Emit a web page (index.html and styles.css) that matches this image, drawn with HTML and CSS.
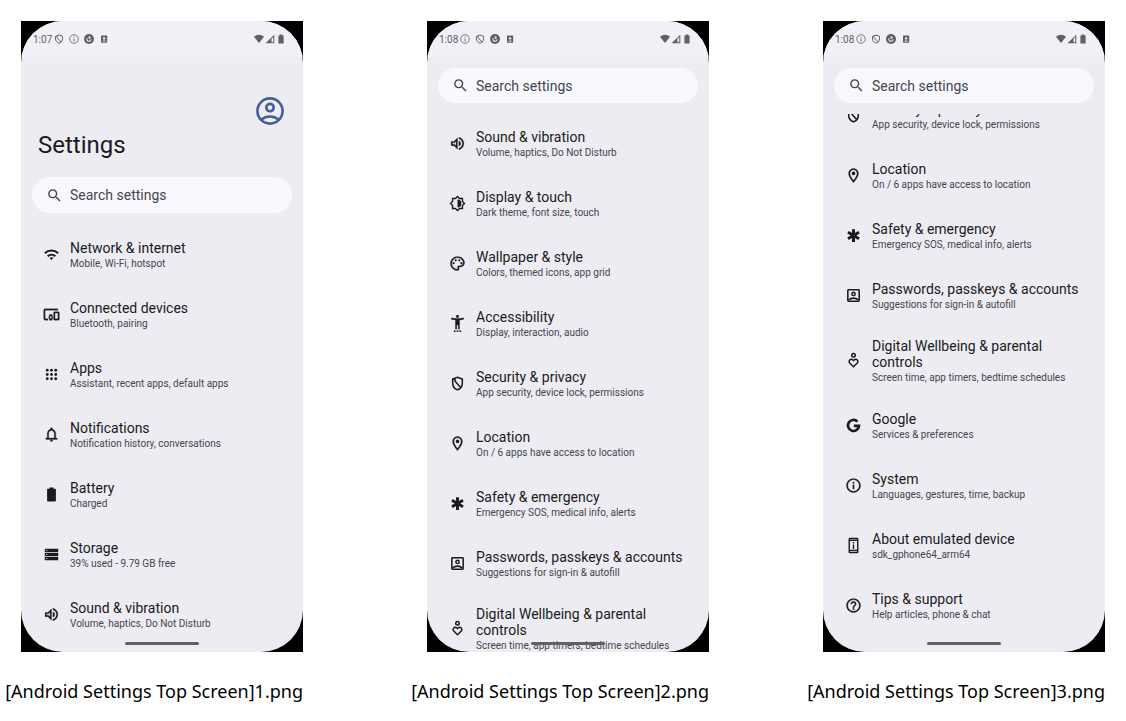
FILE: index.html
```html
<!DOCTYPE html>
<html lang="en">
<head>
<meta charset="utf-8">
<title>Android Settings Top Screen</title>
<link rel="stylesheet" href="styles.css">
</head>
<body>
<svg class="sprite" aria-hidden="true">
  <symbol id="search" viewBox="0 0 24 24"><path d="M15.5 14h-.79l-.28-.27A6.47 6.47 0 0 0 16 9.5 6.5 6.5 0 1 0 9.5 16c1.61 0 3.09-.59 4.23-1.57l.27.28v.79l5 4.99L20.49 19l-4.99-5zm-6 0C7.01 14 5 11.99 5 9.5S7.01 5 9.5 5 14 7.01 14 9.5 11.99 14 9.5 14z"/></symbol>
  <symbol id="wifi" viewBox="0 0 24 24"><path d="M2.6 10.2a13.6 13.6 0 0 1 18.8 0M6.6 14.4a7.8 7.8 0 0 1 10.8 0" fill="none" stroke="currentColor" stroke-width="2.8"/><path d="M12 15.8a3.6 3.6 0 0 1 2.6 1.1L12 19.6l-2.6-2.7a3.6 3.6 0 0 1 2.6-1.1z"/></symbol>
  <symbol id="devices" viewBox="0 0 24 24"><path d="M3 6h18V4H3c-1.1 0-2 .9-2 2v12c0 1.1.9 2 2 2h4v-2H3V6zm10 6H9v1.78c-.61.55-1 1.33-1 2.22s.39 1.67 1 2.22V20h4v-1.78c.61-.55 1-1.34 1-2.22s-.39-1.67-1-2.22V12zm-2 5.5c-.83 0-1.5-.67-1.5-1.5s.67-1.5 1.5-1.5 1.5.67 1.5 1.5-.67 1.5-1.5 1.5zM22 8h-6c-.5 0-1 .5-1 1v10c0 .5.5 1 1 1h6c.5 0 1-.5 1-1V9c0-.5-.5-1-1-1zm-1 10h-4v-8h4v8z" stroke="currentColor" stroke-width=".4"/></symbol>
  <symbol id="apps" viewBox="0 0 24 24"><circle cx="6" cy="6" r="2"/><circle cx="12" cy="6" r="2"/><circle cx="18" cy="6" r="2"/><circle cx="6" cy="12" r="2"/><circle cx="12" cy="12" r="2"/><circle cx="18" cy="12" r="2"/><circle cx="6" cy="18" r="2"/><circle cx="12" cy="18" r="2"/><circle cx="18" cy="18" r="2"/></symbol>
  <symbol id="bell" viewBox="0 0 24 24"><path d="M12 22c1.1 0 2-.9 2-2h-4c0 1.1.9 2 2 2zm6-5v-6c0-3.07-1.63-5.64-4.5-6.32V4c0-.83-.67-1.5-1.5-1.5s-1.5.67-1.5 1.5v.68C7.64 5.36 6 7.92 6 11v6H4v2h16v-2h-2zm-2 0H8v-6c0-2.48 1.51-4.5 4-4.5s4 2.02 4 4.5v6z" stroke="currentColor" stroke-width=".4"/></symbol>
  <symbol id="battery" viewBox="0 0 24 24"><path d="M16.8 4H15V2H9v2H7.2C6.4 4 5.8 4.6 5.8 5.4v15.2c0 .8.6 1.4 1.4 1.4h9.6c.8 0 1.4-.6 1.4-1.4V5.4c0-.8-.6-1.4-1.4-1.4z"/></symbol>
  <symbol id="storage" viewBox="0 0 24 24"><path d="M2.5 20h19v-4.600h-19V20zM4.500 17h1.500v1.500H4.500V17zM2.500 4v4.600h19V4h-19zM6 7H4.500V5.500H6V7zM2.500 14.300h19V9.700h-19v4.600zM4.500 11.200H6v1.500H4.500v-1.500z"/></symbol>
  <symbol id="volume" viewBox="0 0 24 24"><path d="M3 9v6h4l5 5V4L7 9H3zm7-.17v6.34L7.83 13H5v-2h2.83L10 8.83zM16.5 12c0-1.77-1.02-3.29-2.5-4.03v8.05c1.48-.73 2.5-2.25 2.5-4.02zM14 3.23v2.06c2.89.86 5 3.54 5 6.71s-2.11 5.85-5 6.71v2.06c4.01-.91 7-4.49 7-8.77s-2.99-7.86-7-8.77z" stroke="currentColor" stroke-width=".4"/></symbol>
  <symbol id="display" viewBox="0 0 24 24"><path d="M20 8.69V4h-4.69L12 .69 8.69 4H4v4.69L.69 12 4 15.31V20h4.69L12 23.31 15.31 20H20v-4.69L23.31 12 20 8.69zm-2 5.79V18h-3.52L12 20.48 9.52 18H6v-3.52L3.52 12 6 9.52V6h3.52L12 3.52 14.48 6H18v3.52L20.48 12 18 14.48zM12 6.5v11a5.5 5.5 0 0 0 0-11z"/></symbol>
  <symbol id="palette" viewBox="0 0 24 24"><path d="M12 22C6.49 22 2 17.51 2 12S6.49 2 12 2s10 4.04 10 9c0 3.31-2.69 6-6 6h-1.77c-.28 0-.5.22-.5.5 0 .12.05.23.13.33.41.47.64 1.06.64 1.67A2.5 2.5 0 0 1 12 22zm0-18c-4.41 0-8 3.59-8 8s3.59 8 8 8c.28 0 .5-.22.5-.5a.54.54 0 0 0-.14-.35c-.41-.46-.63-1.05-.63-1.65a2.5 2.5 0 0 1 2.5-2.5H16c2.21 0 4-1.79 4-4 0-3.86-3.59-7-8-7z" stroke="currentColor" stroke-width=".4"/><circle cx="6.5" cy="11.5" r="1.5"/><circle cx="9.5" cy="7.5" r="1.5"/><circle cx="14.5" cy="7.5" r="1.5"/><circle cx="17.5" cy="11.5" r="1.5"/></symbol>
  <symbol id="access" viewBox="0 0 24 24"><path d="M20.5 4c-2.61.7-5.67 1-8.5 1s-5.89-.3-8.5-1L3 6c1.86.5 4 .83 6 1v13h2v-6h2v6h2V7c2-.17 4.14-.5 6-1l-.5-2zM12 4c1.1 0 2-.9 2-2s-.9-2-2-2-2 .9-2 2 .9 2 2 2zM7 24h2v-2H7v2zm4 0h2v-2h-2v2zm4 0h2v-2h-2v2z" stroke="currentColor" stroke-width=".3"/></symbol>
  <symbol id="shield" viewBox="0 0 24 24"><path d="M12 3.200l6.800 2.500v5.500c0 4.500-2.700 8.300-6.800 9.700-4.100-1.400-6.800-5.200-6.800-9.700V5.700zM8.400 5v3.500l8.200 9.500" fill="none" stroke="currentColor" stroke-width="2.200"/></symbol>
  <symbol id="pin" viewBox="0 0 24 24"><path d="M12 2C8.13 2 5 5.13 5 9c0 5.25 7 13 7 13s7-7.75 7-13c0-3.87-3.13-7-7-7zM7 9c0-2.76 2.24-5 5-5s5 2.24 5 5c0 2.88-2.88 7.19-5 9.88C9.92 16.21 7 11.85 7 9z" stroke="currentColor" stroke-width=".4"/><circle cx="12" cy="9" r="2.5"/></symbol>
  <symbol id="emergency" viewBox="0 0 24 24"><path d="M12 3v18M4.200 7.500l15.600 9M19.800 7.500l-15.600 9" fill="none" stroke="currentColor" stroke-width="4.200"/></symbol>
  <symbol id="account" viewBox="0 0 24 24"><g fill="none" stroke="currentColor" stroke-width="2.200"><rect x="4" y="4" width="16" height="16" rx="1"/><circle cx="12" cy="9.800" r="2.300"/><path d="M5 18.400c2-1.800 4.300-2.700 7-2.700s5 .9 7 2.700"/></g></symbol>
  <symbol id="wellbeing" viewBox="0 0 24 24"><g fill="none" stroke="currentColor" stroke-width="2.100"><circle cx="12" cy="4.500" r="2.500"/><path d="M12 20.800l-5.300-5.200a3.100 3.100 0 0 1 0-4.400 3.100 3.100 0 0 1 4.400 0l.9.900.9-.9a3.100 3.100 0 0 1 4.400 0 3.100 3.100 0 0 1 0 4.400z"/></g></symbol>
  <symbol id="google" viewBox="0 0 24 24"><path d="M17.600 6.500A7.800 7.800 0 1 0 19.800 12.400h-7.300" fill="none" stroke="currentColor" stroke-width="3.800"/></symbol>
  <symbol id="info" viewBox="0 0 24 24"><path d="M11 7h2v2h-2zm0 4h2v6h-2zm1-9C6.48 2 2 6.48 2 12s4.48 10 10 10 10-4.48 10-10S17.52 2 12 2zm0 18c-4.41 0-8-3.59-8-8s3.590-8 8-8 8 3.590 8 8-3.590 8-8 8z" stroke="currentColor" stroke-width=".3"/></symbol>
  <symbol id="device" viewBox="0 0 24 24"><path d="M11 7h2v2h-2zm0 3.500h2V17h-2z"/><path fill-rule="evenodd" d="M17 1H7C5.900 1 5 1.900 5 3v18c0 1.100.9 2 2 2h10c1.100 0 2-.9 2-2V3c0-1.100-.9-2-2-2zM7 4V3h10v1H7zm0 14V5.500h10V18H7zm0 3v-1h10v1H7z"/></symbol>
  <symbol id="help" viewBox="0 0 24 24"><path d="M11 18h2v-2h-2v2zm1-16C6.480 2 2 6.480 2 12s4.480 10 10 10 10-4.480 10-10S17.520 2 12 2zm0 18c-4.410 0-8-3.590-8-8s3.590-8 8-8 8 3.590 8 8-3.590 8-8 8zm0-14c-2.210 0-4 1.790-4 4h2c0-1.100.9-2 2-2s2 .9 2 2c0 2-3 1.750-3 5h2c0-2.250 3-2.500 3-5 0-2.210-1.790-4-4-4z" stroke="currentColor" stroke-width=".3"/></symbol>
  <symbol id="avatar" viewBox="0 0 28 28"><g fill="none" stroke="currentColor" stroke-width="2.600"><circle cx="14" cy="14" r="12.600"/><circle cx="14" cy="10.600" r="3.700"/><path d="M5.400 22.600c2.400-2 5.300-3.100 8.600-3.100s6.200 1.100 8.600 3.100"/></g></symbol>
  <symbol id="s-shield" viewBox="0 0 10 10"><path d="M5 1l3.500 1.300v2.500c0 2-1.400 3.700-3.500 4.400C2.900 8.500 1.500 6.800 1.500 4.800V2.300zM3 2v1.700l4.300 4.500" fill="none" stroke="currentColor"/></symbol>
  <symbol id="s-info" viewBox="0 0 10 10"><circle cx="5" cy="5" r="4.300" fill="none" stroke="currentColor" stroke-width=".8"/><path d="M4.600 2.600h.9v1h-.9zm0 1.800h.9v3.100h-.9z"/></symbol>
  <symbol id="s-sync" viewBox="0 0 10 10"><circle cx="5" cy="5" r="5"/><path d="M3.200 4.200A2 2 0 1 0 6.900 5.200" fill="none" stroke="#f1f0f7" stroke-width="1.100"/><path d="M4.600 2l2.600 1.500-2.400 1.700z" fill="#f1f0f7"/></symbol>
  <symbol id="s-card" viewBox="0 0 10 10"><rect x="2" y="1.500" width="6.200" height="7.200" rx=".6"/><path d="M3.300 7.400c.3-1.300 3.300-1.300 3.600 0z" fill="#f1f0f7"/><circle cx="5.100" cy="4.400" r="1.200" fill="#f1f0f7"/></symbol>
  <symbol id="s-wifi" viewBox="0 0 10 10"><path d="M0 2.700a7.500 7.500 0 0 1 10 0L5 9z"/></symbol>
  <symbol id="s-signal" viewBox="0 0 10 10"><path d="M.5 9.200h8.800V.8zM6.500 4.800l1.800-1.700v5.100H6.500z" fill-rule="evenodd"/></symbol>
  <symbol id="s-battery" viewBox="0 0 10 10"><path d="M3.700.5h2.600v1h1.300v8H2.400v-8h1.300z"/></symbol>
</svg>

<main class="board">
  <figure class="shot">
    <div class="phone">
      <section class="screen">
        <div class="status"><span>1:07</span>
          <div class="notes"><svg><use href="#s-shield"/></svg><svg><use href="#s-info"/></svg><svg><use href="#s-sync"/></svg><svg><use href="#s-card"/></svg></div>
          <div class="signals"><svg><use href="#s-wifi"/></svg><svg><use href="#s-signal"/></svg><svg><use href="#s-battery"/></svg></div>
        </div>
        <header class="header">
          <button class="avatar" type="button" aria-label="Account"><svg><use href="#avatar"/></svg></button>
          <h1>Settings</h1>
        </header>
        <label class="search"><svg><use href="#search"/></svg><input type="text" placeholder="Search settings" aria-label="Search settings"></label>
        <ul class="list">
          <li><a href="#"><svg><use href="#wifi"/></svg><span class="text"><b>Network &amp; internet</b><small>Mobile, Wi-Fi, hotspot</small></span></a></li>
          <li><a href="#"><svg><use href="#devices"/></svg><span class="text"><b>Connected devices</b><small>Bluetooth, pairing</small></span></a></li>
          <li><a href="#"><svg><use href="#apps"/></svg><span class="text"><b>Apps</b><small>Assistant, recent apps, default apps</small></span></a></li>
          <li><a href="#"><svg><use href="#bell"/></svg><span class="text"><b>Notifications</b><small>Notification history, conversations</small></span></a></li>
          <li><a href="#"><svg><use href="#battery"/></svg><span class="text"><b>Battery</b><small>Charged</small></span></a></li>
          <li><a href="#"><svg><use href="#storage"/></svg><span class="text"><b>Storage</b><small>39% used - 9.79 GB free</small></span></a></li>
          <li><a href="#"><svg><use href="#volume"/></svg><span class="text"><b>Sound &amp; vibration</b><small>Volume, haptics, Do Not Disturb</small></span></a></li>
        </ul>
        <div class="home"></div>
      </section>
    </div>
    <figcaption>[Android Settings Top Screen]1.png</figcaption>
  </figure>

  <figure class="shot">
    <div class="phone">
      <section class="screen">
        <div class="status"><span>1:08</span>
          <div class="notes"><svg><use href="#s-info"/></svg><svg><use href="#s-shield"/></svg><svg><use href="#s-sync"/></svg><svg><use href="#s-card"/></svg></div>
          <div class="signals"><svg><use href="#s-wifi"/></svg><svg><use href="#s-signal"/></svg><svg><use href="#s-battery"/></svg></div>
        </div>
        <label class="search pinned"><svg><use href="#search"/></svg><input type="text" placeholder="Search settings" aria-label="Search settings"></label>
        <ul class="list">
          <li><a href="#"><svg><use href="#volume"/></svg><span class="text"><b>Sound &amp; vibration</b><small>Volume, haptics, Do Not Disturb</small></span></a></li>
          <li><a href="#"><svg><use href="#display"/></svg><span class="text"><b>Display &amp; touch</b><small>Dark theme, font size, touch</small></span></a></li>
          <li><a href="#"><svg><use href="#palette"/></svg><span class="text"><b>Wallpaper &amp; style</b><small>Colors, themed icons, app grid</small></span></a></li>
          <li><a href="#"><svg><use href="#access"/></svg><span class="text"><b>Accessibility</b><small>Display, interaction, audio</small></span></a></li>
          <li><a href="#"><svg><use href="#shield"/></svg><span class="text"><b>Security &amp; privacy</b><small>App security, device lock, permissions</small></span></a></li>
          <li><a href="#"><svg><use href="#pin"/></svg><span class="text"><b>Location</b><small>On / 6 apps have access to location</small></span></a></li>
          <li><a href="#"><svg><use href="#emergency"/></svg><span class="text"><b>Safety &amp; emergency</b><small>Emergency SOS, medical info, alerts</small></span></a></li>
          <li><a href="#"><svg><use href="#account"/></svg><span class="text"><b>Passwords, passkeys &amp; accounts</b><small>Suggestions for sign-in &amp; autofill</small></span></a></li>
          <li><a href="#"><svg><use href="#wellbeing"/></svg><span class="text"><b>Digital Wellbeing &amp; parental controls</b><small>Screen time, app timers, bedtime schedules</small></span></a></li>
        </ul>
        <div class="home"></div>
      </section>
    </div>
    <figcaption>[Android Settings Top Screen]2.png</figcaption>
  </figure>

  <figure class="shot">
    <div class="phone">
      <section class="screen">
        <div class="status"><span>1:08</span>
          <div class="notes"><svg><use href="#s-info"/></svg><svg><use href="#s-shield"/></svg><svg><use href="#s-sync"/></svg><svg><use href="#s-card"/></svg></div>
          <div class="signals"><svg><use href="#s-wifi"/></svg><svg><use href="#s-signal"/></svg><svg><use href="#s-battery"/></svg></div>
        </div>
        <label class="search pinned"><svg><use href="#search"/></svg><input type="text" placeholder="Search settings" aria-label="Search settings"></label>
        <ul class="list scrolled">
          <li><a href="#"><svg><use href="#shield"/></svg><span class="text"><b>Security &amp; privacy</b><small>App security, device lock, permissions</small></span></a></li>
          <li><a href="#"><svg><use href="#pin"/></svg><span class="text"><b>Location</b><small>On / 6 apps have access to location</small></span></a></li>
          <li><a href="#"><svg><use href="#emergency"/></svg><span class="text"><b>Safety &amp; emergency</b><small>Emergency SOS, medical info, alerts</small></span></a></li>
          <li><a href="#"><svg><use href="#account"/></svg><span class="text"><b>Passwords, passkeys &amp; accounts</b><small>Suggestions for sign-in &amp; autofill</small></span></a></li>
          <li><a href="#"><svg><use href="#wellbeing"/></svg><span class="text"><b>Digital Wellbeing &amp; parental controls</b><small>Screen time, app timers, bedtime schedules</small></span></a></li>
          <li><a href="#"><svg><use href="#google"/></svg><span class="text"><b>Google</b><small>Services &amp; preferences</small></span></a></li>
          <li><a href="#"><svg><use href="#info"/></svg><span class="text"><b>System</b><small>Languages, gestures, time, backup</small></span></a></li>
          <li><a href="#"><svg><use href="#device"/></svg><span class="text"><b>About emulated device</b><small>sdk_gphone64_arm64</small></span></a></li>
          <li><a href="#"><svg><use href="#help"/></svg><span class="text"><b>Tips &amp; support</b><small>Help articles, phone &amp; chat</small></span></a></li>
        </ul>
        <div class="home"></div>
      </section>
    </div>
    <figcaption>[Android Settings Top Screen]3.png</figcaption>
  </figure>
</main>
</body>
</html>
```

FILE: styles.css
```css
* { box-sizing: border-box; }
body { margin: 0; background: #fff; font-family: Roboto, sans-serif; color: #1a1b21; }
svg { display: block; flex: none; width: 17px; height: 17px; fill: currentColor; }
.sprite { display: none; }

.board {
  display: grid;
  grid-template-columns: 282fr 124fr 282fr 114fr 282fr;
  padding: 21px;
  padding-bottom: 0;
}
.shot { margin: 0; min-width: 0; }
.shot:nth-child(1) { grid-column: 1; }
.shot:nth-child(2) { grid-column: 3; }
.shot:nth-child(3) { grid-column: 5; }

figcaption {
  display: flex;
  justify-content: flex-end;
  padding-top: 28px;
  font: 18px/22px "Noto Sans", sans-serif;
  color: #000;
  white-space: nowrap;
}

.phone { background: #000; }
.screen {
  position: relative;
  display: flex;
  flex-direction: column;
  aspect-ratio: 282 / 631;
  min-height: 0;
  overflow: hidden;
  border-radius: 42px;
  background: #edecf3;
}

.status {
  display: flex;
  flex: none;
  align-items: center;
  height: 36px;
  padding: 0 17px 0 12px;
  background: #f1f0f7;
  color: #5f6064;
  font-size: 10px;
}
.status svg { width: 10px; height: 10px; }
.notes { display: flex; gap: 5px; margin-left: 2px; }
.signals { display: flex; gap: 1px; margin-left: auto; }

.header { display: flex; flex: none; flex-direction: column; padding: 40px 19px 17px 17px; }
.avatar {
  align-self: flex-end;
  padding: 0;
  border: 0;
  background: none;
  color: #465d95;
}
.avatar svg { width: 28px; height: 28px; }
h1 { margin: 5px 0 0; font-size: 24px; line-height: 30px; font-weight: 400; }

.search {
  display: flex;
  flex: none;
  align-items: center;
  gap: 7px;
  height: 36px;
  margin: 0 11px 11px;
  padding: 0 14px;
  border-radius: 18px;
  background: #f9f8ff;
  color: #44464e;
}
.search.pinned { height: 35px; margin-top: 11px; margin-bottom: 10px; }
.search input {
  flex: 1;
  min-width: 0;
  padding: 0;
  border: 0;
  outline: 0;
  background: none;
  color: inherit;
  font: 14px/20px Roboto, sans-serif;
}
.search input::placeholder { color: inherit; opacity: 1; }

.list { flex: 1; min-height: 0; margin: 0; padding: 0; overflow: hidden; list-style: none; }
.scrolled { margin-top: 1px; }
.scrolled li:first-child { margin-top: -29px; }
.list a {
  display: flex;
  align-items: center;
  gap: 10px;
  min-height: 60px;
  padding: 9px 22px;
  color: inherit;
  text-decoration: none;
}
.text { display: flex; flex-direction: column; min-width: 0; padding-top: 4px; }
.text b { font-size: 14px; line-height: 16px; font-weight: 400; }
.text small { font-size: 10px; line-height: 16px; color: #44464e; white-space: nowrap; }

.home {
  position: absolute;
  bottom: 7px;
  left: 37%;
  right: 37%;
  height: 3px;
  border-radius: 2px;
  background: #606165;
}
```
